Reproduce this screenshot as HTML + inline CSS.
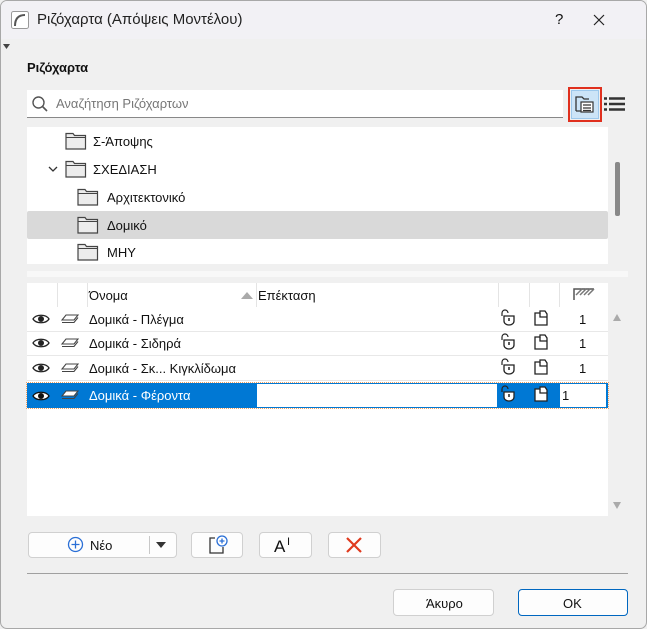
<!DOCTYPE html>
<html><head><meta charset="utf-8"><style>
*{box-sizing:border-box;margin:0;padding:0}
body{width:647px;height:629px;overflow:hidden;background:#f0f0f0;font-family:"Liberation Sans","Noto Sans CJK SC",sans-serif;font-size:13px;color:#111;position:relative}
.a{position:absolute}
.win{position:absolute;left:0;top:0;width:647px;height:629px;border:1px solid #a8a8a8;border-radius:7px;overflow:hidden;background:#f0f0f0}
.btn{position:absolute;background:#fdfdfd;border:1px solid #d0d0d0;border-radius:4px;text-align:center}
.t{position:absolute;font-size:13px;line-height:16px;white-space:nowrap}
.row{position:absolute;left:0;width:581px;height:25px;border-bottom:1px solid #e8e8e8}
.vl{position:absolute;top:0;width:1px;height:24px;background:#e4e4e4}
</style></head><body><div class="win">
<div class="a" style="left:0;top:0;width:647px;height:38px;background:#f2f1f5"></div>
<svg class="a" style="left:10px;top:10px" width="18" height="18" viewBox="0 0 18 18"><rect x=".5" y=".5" width="17" height="17" rx="2" fill="#fff" stroke="#999"/><path d="M4 15 C4 7 8 4 14 4" stroke="#555" stroke-width="2" fill="none"/></svg>
<div class="t" style="left:36px;top:10px;font-size:15px;line-height:18px;color:#222">Ριζόχαρτα (Απόψεις Μοντέλου)</div>
<div class="t" style="left:554px;top:10px;font-size:15px;line-height:18px">?</div>
<svg class="a" style="left:592px;top:13px" width="12" height="12"><path d="M1 1L11 11M11 1L1 11" stroke="#222" stroke-width="1.2"/></svg>
<svg class="a" style="left:2px;top:43px" width="8" height="6"><path d="M0 0H7L3.5 5Z" fill="#444"/></svg>
<div class="t" style="left:26px;top:59px;font-weight:bold">Ριζόχαρτα</div>

<div class="a" style="left:26px;top:89px;width:536px;height:28px;background:#fff;border-bottom:1px solid #888"></div>
<svg class="a" style="left:31px;top:95px" width="16" height="16"><circle cx="6.5" cy="6.5" r="5.5" stroke="#555" stroke-width="1.4" fill="none"/><path d="M10.5 10.5L15 15" stroke="#555" stroke-width="1.6"/></svg>
<div class="t" style="left:55px;top:95px;color:#777">Αναζήτηση Ριζόχαρτων</div>
<div class="a" style="left:567px;top:86px;width:34px;height:35px;border:2px solid #e0301e"></div>
<div class="a" style="left:570px;top:89px;width:28px;height:29px;background:#cce4f7;border:1px solid #9cc8ec"></div>
<svg class="a" style="left:574px;top:94px" width="20" height="18"><path d="M1 16V2H7L9 4H14" stroke="#333" stroke-width="1.3" fill="none"/><path d="M1 16H6" stroke="#333" stroke-width="1.3"/><rect x="6" y="7" width="12" height="10" fill="#fff" stroke="#333" stroke-width="1.2"/><path d="M8 10H16M8 13H16M8 15.5H16" stroke="#333" stroke-width="1.3"/></svg>
<svg class="a" style="left:603px;top:96px" width="21" height="14"><path d="M0 1.5H3M5 1.5H21M0 7H3M5 7H21M0 12.5H3M5 12.5H21" stroke="#333" stroke-width="2.4"/></svg>

<div class="a" style="left:26px;top:126px;width:581px;height:137px;background:#fff">
<svg class="a" style="left:38px;top:5px" width="22" height="18"><path d="M1 17V1.5H8L9.5 3.5H20.5V17Z" fill="#ececec" stroke="#444" stroke-width="1.2"/><path d="M1 5.5H20.5" stroke="#444"/></svg>
<div class="t" style="left:66px;top:7px">Σ-Άποψης</div>
<svg class="a" style="left:21px;top:39px" width="10" height="8"><path d="M1 1L5 5L9 1" stroke="#333" stroke-width="1.3" fill="none"/></svg>
<svg class="a" style="left:38px;top:33px" width="22" height="18"><path d="M1 17V1.5H8L9.5 3.5H20.5V17Z" fill="#ececec" stroke="#444" stroke-width="1.2"/><path d="M1 5.5H20.5" stroke="#444"/></svg>
<div class="t" style="left:66px;top:35px">ΣΧΕΔΙΑΣΗ</div>
<svg class="a" style="left:50px;top:61px" width="22" height="18"><path d="M1 17V1.5H8L9.5 3.5H20.5V17Z" fill="#ececec" stroke="#444" stroke-width="1.2"/><path d="M1 5.5H20.5" stroke="#444"/></svg>
<div class="t" style="left:80px;top:63px">Αρχιτεκτονικό</div>
<div class="a" style="left:0;top:84px;width:581px;height:28px;background:#d9d9d9;border-radius:2px"></div>
<svg class="a" style="left:50px;top:89px" width="22" height="18"><path d="M1 17V1.5H8L9.5 3.5H20.5V17Z" fill="#ececec" stroke="#444" stroke-width="1.2"/><path d="M1 5.5H20.5" stroke="#444"/></svg>
<div class="t" style="left:80px;top:91px">Δομικό</div>
<svg class="a" style="left:50px;top:116px" width="22" height="18"><path d="M1 17V1.5H8L9.5 3.5H20.5V17Z" fill="#ececec" stroke="#444" stroke-width="1.2"/><path d="M1 5.5H20.5" stroke="#444"/></svg>
<div class="t" style="left:80px;top:118px">ΜΗΥ</div>
</div>
<div class="a" style="left:614px;top:161px;width:5px;height:54px;background:#888;border-radius:2px"></div>
<div class="a" style="left:26px;top:270px;width:601px;height:6px;background:#f8f8f8"></div>

<div class="a" style="left:26px;top:282px;width:581px;height:233px;background:#fff">
<div class="row" style="top:0;height:24px;border-bottom:none">
<div class="vl" style="left:30px"></div><div class="vl" style="left:60px"></div><div class="vl" style="left:229px"></div><div class="vl" style="left:471px"></div><div class="vl" style="left:502px"></div><div class="vl" style="left:532px"></div>
<div class="t" style="left:62px;top:5px">Όνομα</div>
<svg class="a" style="left:214px;top:9px" width="12" height="7"><path d="M0 7L6 0L12 7Z" fill="#aaa"/></svg>
<div class="t" style="left:231px;top:5px">Επέκταση</div>
<svg class="a" style="left:546px;top:4px" width="22" height="14"><path d="M1 13V2H21" stroke="#555" stroke-width="1.5" fill="none"/><path d="M3 8L9 2M7 8L13 2M11 8L17 2M15 8L21 2" stroke="#777" stroke-width="1.5"/></svg>
</div>
</div>
<div class="a" style="left:26px;top:306px;width:581px;height:110px">
<div class="row" style="top:0"></div><div class="row" style="top:24px"></div><div class="row" style="top:49px"></div>
<div class="a" style="left:0;top:76px;width:581px;height:25px;background:#0078d4;outline:1px dotted #f0a060"></div>
<div class="a" style="left:230px;top:77px;width:240px;height:23px;background:#fff"></div>
<div class="a" style="left:533px;top:77px;width:46px;height:23px;background:#fff"></div>
</div>
<div class="t" style="left:88px;top:311px">Δομικά - Πλέγμα</div>
<div class="t" style="left:88px;top:335px">Δομικά - Σιδηρά</div>
<div class="t" style="left:88px;top:360px">Δομικά - Σκ... Κιγκλίδωμα</div>
<div class="t" style="left:88px;top:387px;color:#fff">Δομικά - Φέροντα</div>
<div class="t" style="left:578px;top:311px">1</div>
<div class="t" style="left:578px;top:335px">1</div>
<div class="t" style="left:578px;top:360px">1</div>
<div class="t" style="left:561px;top:387px">1</div>

<svg class="a" style="left:0;top:0" width="647" height="629">
<defs>
<g id="eye"><path d="M0 6C3 1 13 1 16 6C13 11 3 11 0 6Z" fill="#fff" stroke="#222" stroke-width="1.3"/><circle cx="8" cy="6" r="3" fill="#222"/></g>
<g id="lay"><path d="M1 9L5 4H17L13 9Z" fill="#fff" stroke="#444" stroke-width="1.1"/><path d="M1 11.5H13L17 6.5" stroke="#444" stroke-width="1.1" fill="none"/></g>
<g id="lock"><path d="M1 6V3A3 3 0 0 1 7 3" stroke="#222" stroke-width="1.2" fill="none"/><path d="M3 6H13V11A5 4 0 0 1 3 11Z" fill="#fff" stroke="#222" stroke-width="1.3"/><path d="M8 8V11" stroke="#222" stroke-width="1.5"/></g>
<g id="gh"><path d="M1 3H6V1H11L13 4V15H1Z" fill="#fff" stroke="#222" stroke-width="1.3"/><path d="M6 3V7H13" stroke="#222" stroke-width="1.3" fill="none"/></g>
</defs>
<use href="#eye" x="32" y="312"/><use href="#eye" x="32" y="336"/><use href="#eye" x="32" y="361"/>
<g transform="translate(32 389)"><path d="M0 6C3 1 13 1 16 6C13 11 3 11 0 6Z" fill="#fff" stroke="#111" stroke-width="1.3"/><circle cx="8" cy="6" r="3" fill="#111"/></g>
<use href="#lay" x="60" y="310"/><use href="#lay" x="60" y="334"/><use href="#lay" x="60" y="359"/><use href="#lay" x="60" y="386"/>
<use href="#lock" x="500" y="309"/><use href="#lock" x="500" y="333"/><use href="#lock" x="500" y="358"/><use href="#lock" x="500" y="385"/>
<use href="#gh" x="533" y="309"/><use href="#gh" x="533" y="333"/><use href="#gh" x="533" y="358"/><use href="#gh" x="533" y="385"/>
<path d="M612 320L616 313L620 320Z" fill="#aaa"/><path d="M612 501L616 508L620 501Z" fill="#aaa"/>
</svg>

<div class="btn" style="left:27px;top:531px;width:149px;height:26px"></div>
<div class="a" style="left:148px;top:535px;width:1px;height:18px;background:#c8c8c8"></div>
<svg class="a" style="left:66px;top:535px" width="17" height="17"><circle cx="8.5" cy="8.5" r="7" fill="none" stroke="#2a6fd6" stroke-width="1.3"/><path d="M8.5 4.5V12.5M4.5 8.5H12.5" stroke="#2a6fd6" stroke-width="1.3"/></svg>
<div class="t" style="left:89px;top:537px">Νέο</div>
<svg class="a" style="left:155px;top:541px" width="10" height="6"><path d="M0 0H10L5 6Z" fill="#333"/></svg>
<div class="btn" style="left:190px;top:531px;width:52px;height:26px"></div>
<svg class="a" style="left:207px;top:534px" width="22" height="20"><path d="M2 6V18H15V12" stroke="#333" stroke-width="1.3" fill="none"/><path d="M2 6V3H7" stroke="#333" stroke-width="1.3" fill="none"/><circle cx="14" cy="6" r="5" fill="#fff" stroke="#2a6fd6" stroke-width="1.3"/><path d="M14 3.5V8.5M11.5 6H16.5" stroke="#2a6fd6" stroke-width="1.3"/></svg>
<div class="btn" style="left:258px;top:531px;width:53px;height:26px"></div>
<div class="t" style="left:273px;top:537px;font-size:17px;line-height:18px">A</div>
<div class="t" style="left:286px;top:533px;font-size:11px">I</div>
<div class="btn" style="left:327px;top:531px;width:53px;height:26px"></div>
<svg class="a" style="left:345px;top:536px" width="16" height="16"><path d="M1 1L15 15M15 1L1 15" stroke="#e03a1e" stroke-width="2.2"/></svg>
<div class="a" style="left:26px;top:572px;width:601px;height:1px;background:#a0a0a0"></div>
<div class="btn" style="left:392px;top:588px;width:101px;height:27px"></div>
<div class="t" style="left:425px;top:595px">Άκυρο</div>
<div class="btn" style="left:517px;top:588px;width:110px;height:27px;border-color:#0067c0"></div>
<div class="t" style="left:562px;top:595px">OK</div>
</div></body></html>
